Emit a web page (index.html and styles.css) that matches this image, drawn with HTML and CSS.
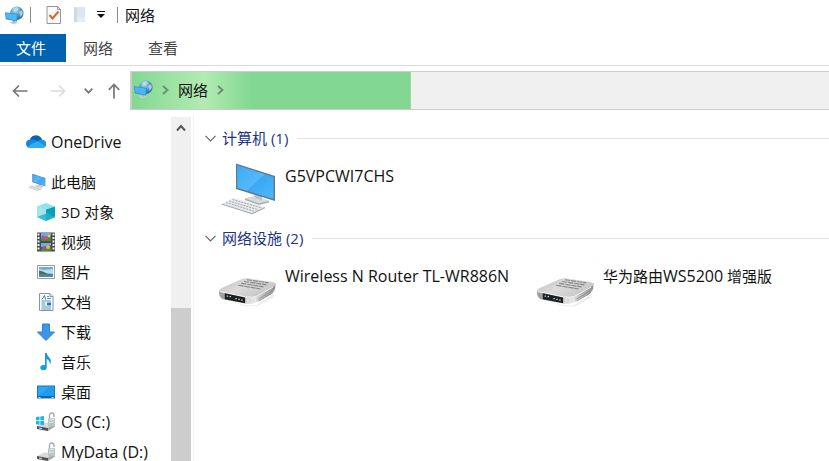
FILE: index.html
```
<!DOCTYPE html>
<html lang="zh-CN">
<head>
  <meta charset="UTF-8">
  <meta name="viewport" content="width=device-width, initial-scale=1.0">
  <title>网络</title>
  <link rel="stylesheet" href="styles.css">
</head>
<body>
  <!-- Shared icons -->
  <svg class="sprite" aria-hidden="true">
    <defs>
      <linearGradient id="screen" x1="0" y1="0" x2="1" y2="1">
        <stop offset="0" stop-color="#3da9f5"/>
        <stop offset="0.5" stop-color="#55b9fb"/>
        <stop offset="0.52" stop-color="#3ba8f5"/>
        <stop offset="1" stop-color="#4fb8fc"/>
      </linearGradient>
      <radialGradient id="globe" cx="0.4" cy="0.3" r="0.7">
        <stop offset="0" stop-color="#b5dcec"/>
        <stop offset="0.5" stop-color="#5fa6c8"/>
        <stop offset="1" stop-color="#2a6d95"/>
      </radialGradient>
      <linearGradient id="metal" x1="0" y1="0" x2="1" y2="0.6">
        <stop offset="0" stop-color="#bcbcbc"/>
        <stop offset="0.5" stop-color="#dcdcdc"/>
        <stop offset="1" stop-color="#c4c4c4"/>
      </linearGradient>
      <linearGradient id="side" x1="0" y1="0" x2="1" y2="0">
        <stop offset="0" stop-color="#9a9a9a"/>
        <stop offset="0.5" stop-color="#cfcfcf"/>
        <stop offset="0.6" stop-color="#e6e6e6"/>
        <stop offset="1" stop-color="#8c8c8c"/>
      </linearGradient>
    </defs>

    <symbol id="icon-network" viewBox="0 0 19 19">
      <circle cx="11.800" cy="7.200" r="6.700" fill="url(#globe)"/>
      <path d="M8 2.500l3.500-1.500 2.500 1-1.400 2.400-3.300 1.200zM14 6l3-1.500 1 3-2.300 3.500z" fill="#c6e3e8" opacity=".75"/>
      <path d="M4.500 16.500l4.500-1.500 4 1.500-4.500 2z" fill="#c3cbcf"/>
      <path d="M7.500 13l2.600.4.200 3-2.400.3z" fill="#a9b4b9"/>
      <path d="M0 6.200L12.800 8 12 15.500.8 13.200z" fill="#2e8bce"/>
      <path d="M.8 7L12 8.600l-.7 6.100-9.800-2.100z" fill="#4ab7fb"/>
    </symbol>

    <symbol id="icon-computer" viewBox="0 0 60 54">
      <path d="M28 37.500l10-2.500 14 5v1.500L42 44l-14-5z" fill="#a3adb1"/>
      <path d="M28 37.500l10-3 14 5.500-10 2.500z" fill="#d5dbde"/>
      <path d="M37 32l8 2.500v5L38 37z" fill="#b9c2c6"/>
      <path d="M19 2.500l39 12.500v25L19 28z" fill="#5f7a8c"/>
      <path d="M20.200 4.200L56.500 16v22L20.200 26.800z" fill="url(#screen)"/>
      <path d="M17 37l31 9-13 6L5 42.500z" fill="#e9ebec"/>
      <path d="M5 42.500v1.300l30 9.500 13-6V46l-13 6z" fill="#a6adb1"/>
      <path d="M15.500 38.500l29.500 8.500M12 40l29 8.700M9 41.500l28 8.700" stroke="#9aa2a6" stroke-width=".9" stroke-dasharray="2.200 .8" fill="none"/>
    </symbol>

    <symbol id="icon-router" viewBox="0 0 62 54">
      <path d="M6 38l22 6.500 12 .5 18-12 3-8-3 12-17 9-13-.5z" fill="#ededed"/>
      <path d="M2 30l26 6 28-12 4.500-2-.5 6-3 5-16 8.500q-4 2.500-12 1.500L6 38.500Q2 37 2 30z" fill="url(#side)"/>
      <path d="M2 30q0-1.500 3-3l19-8.500q4-2 8-1.500l24 3.500q6 1 4 4L42 35q-4 2-12 1L5 31Q2 30.500 2 30z" fill="url(#metal)"/>
      <path d="M3 30.800l26 5.400q8 1 12-.7L58 26" stroke="#f2f2f2" fill="none"/>
      <g stroke="#858585" stroke-width="1.200" stroke-dasharray="5.500 .8" fill="none">
        <path d="M31 18.500l22 3.200M28 20.300l23 3.400M25 22.200l23 3.600M22 24.200l23 3.800"/>
      </g>
      <path d="M8 32.500l21 4.300v6L8 38.500z" fill="#1b2023"/>
      <path d="M10 35.500h1.500M13 36h1.500M19 38h1.500M22 38.800h1.500M25 39.500h1.500" stroke="#cfdadd" stroke-width="1.300"/>
      <path d="M32 37.500v6M40 37v5.500" stroke="#f0f0f0"/>
      <path d="M43 38.500l14-8.500M43 40.500l13-7.500" stroke="#8b8b8b" stroke-width=".8" fill="none"/>
    </symbol>

    <symbol id="icon-drive" viewBox="0 0 20 20">
      <path d="M1 14l7-3.500 11 .5-6 5z" fill="#d9d9d9"/>
      <path d="M1 14l11 2v3L1 17z" fill="#4f5254"/>
      <path d="M12 16l7-5v3.500L12 19z" fill="#a5a5a5"/>
      <path d="M3 16l3 .6" stroke="#dedede"/>
      <path d="M13.500 7V3.500q0-2.500 2.200-2.500t2.300 2.500V5" fill="none" stroke="#a3adb1" stroke-width="1.400"/>
      <path d="M12 6.500l7-.5v8l-7 .8z" fill="#b9c6c9"/>
      <path d="M13 8l5-.5M13 10.500l5-.5" stroke="#e0e8e9"/>
    </symbol>

    <symbol id="icon-chevron-right" viewBox="0 0 7 10">
      <path d="M1 1l4.500 4L1 9" fill="none" stroke="currentColor" stroke-width="1.800"/>
    </symbol>
    <symbol id="icon-chevron-down" viewBox="0 0 11 7">
      <path d="M.5.8l5 5 5-5" fill="none" stroke="currentColor" stroke-width="1.200"/>
    </symbol>
  </svg>

  <header class="title-bar">
    <svg class="icon-small"><use href="#icon-network"/></svg>
    <span class="divider"></span>
    <button class="quick-button" aria-label="属性">
      <svg width="16" height="20" viewBox="0 0 16 20">
        <path d="M1 1.500h10.500l3 3V18.500H1z" fill="#fafafa" stroke="#969696"/>
        <path d="M11.500 1.500v3h3" fill="none" stroke="#969696"/>
        <path d="M3.500 10l3 3.500 6-7" fill="none" stroke="#e2602b" stroke-width="2"/>
      </svg>
    </button>
    <button class="quick-button" aria-label="新建文件夹">
      <svg width="13" height="18" viewBox="0 0 13 18">
        <path d="M1 1h11v15H1z" fill="#dde5ee"/>
        <path d="M1 1l3 2v14l-3-2z" fill="#cbd8e5"/>
        <path d="M4 10l8 2v4H4z" fill="#e6ecf3"/>
      </svg>
    </button>
    <button class="quick-button" aria-label="自定义快速访问工具栏">
      <svg width="8" height="8" viewBox="0 0 8 8">
        <path d="M0 .5h8" stroke="#111"/>
        <path d="M0 3h8L4 7z" fill="#111"/>
      </svg>
    </button>
    <span class="divider"></span>
    <h1 class="window-title">网络</h1>
  </header>

  <nav class="tabs">
    <button class="tab tab-file">文件</button>
    <button class="tab">网络</button>
    <button class="tab">查看</button>
  </nav>

  <div class="nav-row">
    <div class="nav-buttons">
      <button class="nav-button" aria-label="后退">
        <svg width="16" height="14" viewBox="0 0 16 14"><path d="M15.500 7H1.500M7 1.500L1.500 7 7 12.500" fill="none" stroke="#777" stroke-width="1.700"/></svg>
      </button>
      <button class="nav-button nav-forward" aria-label="前进" disabled>
        <svg width="16" height="14" viewBox="0 0 16 14"><path d="M.5 7h14M9 1.500L14.500 7 9 12.500" fill="none" stroke="#dcdcdc" stroke-width="1.700"/></svg>
      </button>
      <button class="nav-button nav-recent" aria-label="最近浏览的位置">
        <svg width="9" height="6" viewBox="0 0 9 6"><path d="M.7.700l3.800 4 3.800-4" fill="none" stroke="#777" stroke-width="1.700"/></svg>
      </button>
      <button class="nav-button nav-up" aria-label="上移">
        <svg width="12" height="16" viewBox="0 0 12 16"><path d="M6 15.500v-14M.8 6.800L6 1.500l5.200 5.300" fill="none" stroke="#777" stroke-width="1.700"/></svg>
      </button>
    </div>
    <div class="address-bar">
      <svg class="icon-small"><use href="#icon-network"/></svg>
      <svg class="crumb-arrow"><use href="#icon-chevron-right"/></svg>
      <a class="crumb" href="#">网络</a>
      <svg class="crumb-arrow"><use href="#icon-chevron-right"/></svg>
    </div>
  </div>

  <div class="explorer">
    <aside class="sidebar">
      <ul class="tree">
        <li><a class="tree-item tree-root" href="#">
          <svg viewBox="0 0 20 20">
            <path d="M4.500 16Q0 15.500 0 11.500 0 8 4 7.500 5.500 3.500 10 3.500q4 0 6 4.200 4 .3 4 4.300 0 4-4 4z" fill="#1686d9"/>
            <path d="M4 7.500Q5.500 3.500 10 3.500q4 0 6 4.200-2.500-.2-4.500 1.500Q8 6.800 4 7.500z" fill="#0c62b1"/>
            <path d="M11.500 9.200q2-1.700 4.500-1.500 4 .3 4 4.300 0 1-.5 2z" fill="#1c94e4"/>
            <path d="M2 15q4-4 9.500-5.800l8 4.800q-1 2-3.500 2H4.500Q3 16 2 15z" fill="#30aeef"/>
          </svg>
          <span class="latin">OneDrive</span>
        </a></li>
        <li><a class="tree-item tree-root" href="#">
          <svg viewBox="0 0 60 54"><use href="#icon-computer"/></svg>
          <span>此电脑</span>
        </a></li>
        <li><a class="tree-item" href="#">
          <svg viewBox="0 0 20 20">
            <path d="M10 1l9 3.500-9 3-9-3z" fill="#8ce4ef"/>
            <path d="M1 4.500l9 3V19l-9-4z" fill="#45c3d8"/>
            <path d="M10 7.500l9-3V15l-9 4z" fill="#0c9db9"/>
            <path d="M1 15l9-5 9 5-9 4z" fill="#32b7cc" opacity=".6"/>
            <path d="M1 4.500l9 3v4L1 15z" fill="#cdf3f6" opacity=".7"/>
          </svg>
          <span>3D 对象</span>
        </a></li>
        <li><a class="tree-item" href="#">
          <svg viewBox="0 0 20 20">
            <path d="M1 .5h18v19H1z" fill="#4b4b4b"/>
            <path d="M2.500 1.500v17M17.500 1.500v17" stroke="#f3f3f3" stroke-width="2" stroke-dasharray="2 1.500"/>
            <path d="M5 1h10v8H5zM5 11h10v8H5z" fill="#2b60c6"/>
            <path d="M5 1h10v2L9 5 5 7zM5 11h10v2l-4 1-6 1z" fill="#6cabea"/>
            <path d="M5 7l3-1 3 1 4-3v5H5zM5 17l4-1 6-2v5H5z" fill="#4c8b38"/>
            <circle cx="10" cy="6" r="2" fill="#dd5252"/><circle cx="13" cy="4" r="1.500" fill="#f1ce45"/>
            <circle cx="7" cy="5" r="1.500" fill="#b44ba5"/><circle cx="12" cy="15" r="2" fill="#e8b93a"/>
            <circle cx="8" cy="16" r="1.500" fill="#d04d58"/>
          </svg>
          <span>视频</span>
        </a></li>
        <li><a class="tree-item" href="#">
          <svg viewBox="0 0 20 20">
            <path d="M1.500 3.500h17v13h-17z" fill="#fff" stroke="#9b9b9b"/>
            <path d="M3 5h14v10H3z" fill="#b9dcf0"/>
            <path d="M3 5h14v2L8 8 3 7z" fill="#71abdc"/>
            <path d="M3 8.500l4 1 4 2 6 .5v1H3z" fill="#3e755b"/>
            <path d="M3 12l14 .5V15H3z" fill="#52879c"/>
          </svg>
          <span>图片</span>
        </a></li>
        <li><a class="tree-item" href="#">
          <svg viewBox="0 0 20 20">
            <path d="M3.500 1.500h10.500l3 3v14H3.500z" fill="#fafcfd" stroke="#8e9498"/>
            <path d="M14 1.500v3h3" fill="#dce2e5" stroke="#8e9498"/>
            <path d="M6 7.500l2.500-4 1 4" fill="none" stroke="#337fb2"/>
            <path d="M11 4.500h2M11 6.500h4M5.500 9h9.500M5.500 11h4M5.500 13h4M5.500 15h9.500M5.500 17h9.500" stroke="#4e9ac7"/>
            <path d="M11 10.500h4v3h-4z" fill="#3c73a6"/>
          </svg>
          <span>文档</span>
        </a></li>
        <li><a class="tree-item" href="#">
          <svg viewBox="0 0 20 20">
            <path d="M6.500 2h7v8h5L10 18.500 1.500 10h5z" fill="#3b97e3" stroke="#2b82cd"/>
          </svg>
          <span>下载</span>
        </a></li>
        <li><a class="tree-item" href="#">
          <svg viewBox="0 0 20 20">
            <ellipse cx="7.500" cy="15.500" rx="3.200" ry="2.600" fill="#159ce9"/>
            <path d="M9 1h1.700q.3 2.500 2.500 4.500 3 3 .8 7 .2-3.500-3.300-5.500v8.500H9z" fill="#159ce9"/>
          </svg>
          <span>音乐</span>
        </a></li>
        <li><a class="tree-item" href="#">
          <svg viewBox="0 0 20 20">
            <path d="M1 3.500h18v13H1z" fill="#1674b8"/>
            <path d="M2 4.500h16v9.500H2z" fill="#2fa7f7"/>
            <path d="M2 14L14 4.500h4V14z" fill="#229af0"/>
            <path d="M2 15h16" stroke="#0b568d"/>
            <path d="M2.500 15.500h2M15.500 15.500h2" stroke="#d9effb"/>
          </svg>
          <span>桌面</span>
        </a></li>
        <li><a class="tree-item" href="#">
          <svg viewBox="0 0 20 20">
            <use href="#icon-drive"/>
            <path d="M0 5l3.500-.5v3.800H0zM4.300 4.400L8 3.900v4.400H4.300zM0 9h3.500v3.700L0 12.200zM4.300 9H8v4.300l-3.700-.5z" fill="#1cb4e8"/>
          </svg>
          <span class="latin">OS (C:)</span>
        </a></li>
        <li><a class="tree-item" href="#">
          <svg viewBox="0 0 20 20"><use href="#icon-drive"/></svg>
          <span class="latin">MyData (D:)</span>
        </a></li>
      </ul>
      <div class="scrollbar">
        <button class="scroll-up" aria-label="向上滚动">
          <svg width="10" height="8" viewBox="0 0 10 8"><path d="M1 6.500l4-4.500 4 4.500" fill="none" stroke="#555" stroke-width="2"/></svg>
        </button>
        <div class="scroll-thumb"></div>
      </div>
    </aside>

    <main class="content">
      <section class="group">
        <h2 class="group-header">
          <button class="group-toggle" aria-expanded="true">
            <svg class="group-arrow"><use href="#icon-chevron-down"/></svg>
            计算机 (1)
          </button>
        </h2>
        <div class="items">
          <a class="item" href="#">
            <svg class="item-icon"><use href="#icon-computer"/></svg>
            <span class="latin">G5VPCWI7CHS</span>
          </a>
        </div>
      </section>
      <section class="group">
        <h2 class="group-header">
          <button class="group-toggle" aria-expanded="true">
            <svg class="group-arrow"><use href="#icon-chevron-down"/></svg>
            网络设施 (2)
          </button>
        </h2>
        <div class="items">
          <a class="item" href="#">
            <svg class="item-icon"><use href="#icon-router"/></svg>
            <span class="latin">Wireless N Router TL-WR886N</span>
          </a>
          <a class="item" href="#">
            <svg class="item-icon"><use href="#icon-router"/></svg>
            <span>华为路由<span class="latin">WS5200</span> 增强版</span>
          </a>
        </div>
      </section>
    </main>
  </div>
</body>
</html>
```

FILE: styles.css
```
* {
  box-sizing: border-box;
}
body {
  display: flex;
  flex-direction: column;
  height: 100vh;
  margin: 0;
  overflow: hidden;
  background-color: #fff;
  color: #111;
  font-family: "Open Sans", "Noto Sans CJK SC", sans-serif;
  font-size: 15px;
  line-height: 20px;
}
button {
  display: flex;
  align-items: center;
  justify-content: center;
  padding: 0;
  border: none;
  background: none;
  color: inherit;
  font: inherit;
}
a {
  color: inherit;
  text-decoration: none;
}
svg {
  flex: none;
}
.sprite {
  position: absolute;
  width: 0;
  height: 0;
}
.icon-small {
  width: 19px;
  height: 19px;
}
.latin {
  font-size: 16px;
}

/* Title bar */
.title-bar {
  display: flex;
  align-items: center;
  flex: none;
  height: 34px;
  padding: 0 5px 4px;
}
.divider {
  width: 1px;
  height: 16px;
  margin: 0 15px 0 6px;
  background-color: #8c8c8c;
}
.quick-button {
  margin-right: 11px;
}
.quick-button + .divider {
  margin: 0 7px 0 1px;
}
.window-title {
  margin: 0;
  font-size: 15px;
  font-weight: 400;
}

/* Ribbon tabs */
.tabs {
  display: flex;
  flex: none;
  gap: 1px;
  height: 32px;
  padding-bottom: 3px;
  border-bottom: 1px solid #dadada;
}
.tab {
  padding: 0 17px;
  color: #444;
}
.tab-file {
  padding: 0 20px 0 16px;
  margin-right: -1px;
  background-color: #0063b1;
  color: #fff;
}

/* Navigation and address bar */
.nav-row {
  display: flex;
  flex: none;
  padding: 5px 0;
}
.nav-buttons {
  display: flex;
  align-items: center;
  flex: none;
  width: 130px;
  padding-left: 12px;
}
.nav-forward {
  margin-left: 22px;
}
.nav-recent {
  margin-left: 18px;
}
.nav-up {
  margin-left: 15px;
}
.address-bar {
  display: flex;
  align-items: center;
  flex: 1;
  height: 39px;
  padding: 0 0 2px 2px;
  border: 1px solid #ccc;
  border-right: none;
  border-left-width: 2px;
  /* loading progress with a soft highlight sweeping over it */
  background:
    linear-gradient(90deg, rgba(190, 240, 185, 0), rgba(190, 240, 185, 0.8) 60%, rgba(190, 240, 185, 0)) 0 0 / 120px 100% no-repeat,
    linear-gradient(#82d892, #82d892) 0 0 / 40% 100% no-repeat,
    #f0f0f0;
}
.crumb-arrow {
  width: 7px;
  height: 10px;
  margin: 0 9px;
  color: #6d8b70;
}

/* Folder tree */
.explorer {
  display: flex;
  flex: 1;
  min-height: 0;
}
.sidebar {
  display: flex;
  flex: none;
  width: 194px;
  padding: 2px 2px 0 0;
  border-right: 1px solid #f3f3f3;
}
.tree {
  flex: 1;
  margin: 0;
  padding: 10px 0 0;
  overflow: hidden;
  list-style: none;
}
.tree-item {
  display: flex;
  align-items: center;
  gap: 5px;
  height: 30px;
  padding-left: 36px;
  white-space: nowrap;
}
.tree-item svg {
  width: 20px;
  height: 20px;
}
.tree-root {
  padding-left: 26px;
}
li + li > .tree-root {
  margin-top: 10px;
}
.scrollbar {
  display: flex;
  flex-direction: column;
  width: 20px;
  background-color: #f0f0f0;
}
.scroll-up {
  flex: none;
  height: 21px;
}
.scroll-thumb {
  flex: 1;
  margin-top: 170px;
  background-color: #cdcdcd;
}

/* Content groups */
.content {
  flex: 1;
  min-width: 0;
  padding: 11px 0 0 11px;
}
.group {
  margin-bottom: 11px;
}
.group-header {
  display: flex;
  align-items: center;
  gap: 9px;
  height: 24px;
  margin: 0 0 11px;
  color: #1e3287;
  font-size: 15px;
  font-weight: 400;
}
.group-header::after {
  content: '';
  flex: 1;
  height: 1px;
  background-color: #e2e2e2;
}
.group-toggle {
  gap: 6px;
}
.group-arrow {
  width: 11px;
  height: 7px;
  color: #666;
}
.items {
  display: grid;
  grid-template-columns: repeat(auto-fill, 290px);
  column-gap: 28px;
  padding-left: 12px;
}
.item {
  display: flex;
  gap: 8px;
  line-height: 30px;
  white-space: nowrap;
}
.item-icon {
  width: 60px;
  height: 54px;
}
```
